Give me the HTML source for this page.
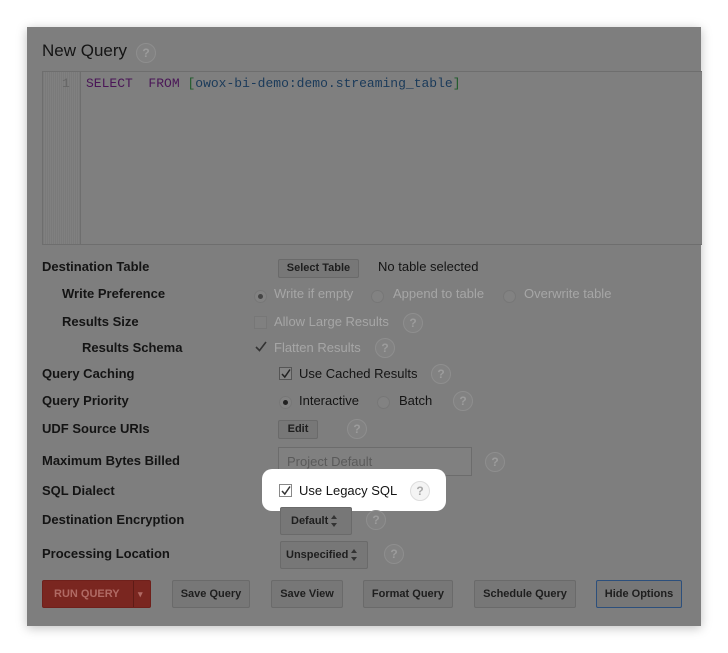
<!DOCTYPE html>
<html><head><meta charset="utf-8"><style>
*{box-sizing:border-box;margin:0;padding:0}
body{width:728px;height:653px;background:#fff;font-family:"Liberation Sans",sans-serif;position:relative;overflow:hidden}
.panel{position:absolute;left:27px;top:27px;width:674px;height:599px;background:#7e7e7e;box-shadow:0 2px 10px rgba(0,0,0,.25)}
.a{position:absolute;white-space:nowrap}
.lbl{font-weight:bold;font-size:13px;color:#141414}
.dis{font-size:13px;color:#a6a6a6}
.txt{font-size:13px;color:#141414}
.help{position:absolute;width:20px;height:20px;border-radius:50%;border:1px solid #8e8e8e;background:#828282;color:#9c9c9c;font-size:12px;font-weight:bold;text-align:center;line-height:18px}
.btn{position:absolute;background:#777;border:1px solid #6a6a6a;border-radius:2px;font-size:11px;font-weight:bold;color:#1e1e1e;text-align:center}
.cb{position:absolute;width:13px;height:13px;border:1px solid #555;background:#858585}
.cb svg{position:absolute;left:0;top:0}
.rd{position:absolute;width:13px;height:13px;border:1px solid #777;border-radius:50%;background:#828282}
.arr{display:inline-block;vertical-align:middle;width:7px;height:12px;position:relative;margin-left:3px}
.arr:before{content:"";position:absolute;left:0;top:0;border:3.5px solid transparent;border-bottom:4px solid #333;border-top:0}
.arr:after{content:"";position:absolute;left:0;bottom:0;border:3.5px solid transparent;border-top:4px solid #333;border-bottom:0}
</style></head><body>
<div class="panel"></div>
<div class="a" style="left:42px;top:41px;font-size:17px;color:#141414">New Query</div>
<div class="help" style="left:136px;top:43px">?</div>
<div class="a" style="left:42px;top:71px;width:660px;height:174px;border:1px solid #6e6e6e;border-right:none;background:#7f7f7f"></div>
<div class="a" style="left:43px;top:72px;width:38px;height:172px;background:repeating-linear-gradient(90deg,#7a7a7a 0 1px,#808080 1px 2px);border-right:1px solid #6e6e6e"></div>
<div class="a" style="left:62px;top:76px;font-family:'Liberation Mono',monospace;font-size:13px;color:#666">1</div>
<div class="a" style="left:86px;top:76px;font-family:'Liberation Mono',monospace;font-size:13px;color:#3a1a50"><span style="color:#4a1657">SELECT</span>&nbsp; <span style="color:#4a1657">FROM</span> <span style="color:#1e5a2a">[</span><span style="color:#1a3a5a">owox-bi-demo:demo.streaming_table</span><span style="color:#1e5a2a">]</span></div>

<div class="a lbl" style="left:42px;top:259px">Destination Table</div>
<div class="btn" style="left:278px;top:259px;width:81px;height:19px;line-height:17px">Select Table</div>
<div class="a txt" style="left:378px;top:259px">No table selected</div>

<div class="a lbl" style="left:62px;top:286px">Write Preference</div>
<div class="rd" style="left:254px;top:290px"><div style="width:5px;height:5px;background:#444;border-radius:50%;margin:3px"></div></div>
<div class="a dis" style="left:274px;top:286px">Write if empty</div>
<div class="rd" style="left:371px;top:290px"></div>
<div class="a dis" style="left:393px;top:286px">Append to table</div>
<div class="rd" style="left:503px;top:290px"></div>
<div class="a dis" style="left:524px;top:286px">Overwrite table</div>

<div class="a lbl" style="left:62px;top:314px">Results Size</div>
<div class="cb" style="left:254px;top:316px;border-color:#777;background:#808080"></div>
<div class="a dis" style="left:274px;top:314px">Allow Large Results</div>
<div class="help" style="left:403px;top:313px">?</div>

<div class="a lbl" style="left:82px;top:340px">Results Schema</div>
<svg class="a" style="left:254px;top:340px" width="14" height="13"><path d="M2 7 L5.5 10.5 L12 2" stroke="#333" stroke-width="1.6" fill="none"/></svg>
<div class="a dis" style="left:274px;top:340px">Flatten Results</div>
<div class="help" style="left:375px;top:338px">?</div>

<div class="a lbl" style="left:42px;top:366px">Query Caching</div>
<div class="cb" style="left:279px;top:367px"><svg width="12" height="12"><path d="M2 6 L4.8 9 L10 1.5" stroke="#222" stroke-width="1.5" fill="none"/></svg></div>
<div class="a txt" style="left:299px;top:366px">Use Cached Results</div>
<div class="help" style="left:431px;top:364px">?</div>

<div class="a lbl" style="left:42px;top:393px">Query Priority</div>
<div class="rd" style="left:279px;top:396px"><div style="width:5px;height:5px;background:#222;border-radius:50%;margin:3px"></div></div>
<div class="a txt" style="left:299px;top:393px">Interactive</div>
<div class="rd" style="left:377px;top:396px"></div>
<div class="a txt" style="left:399px;top:393px">Batch</div>
<div class="help" style="left:453px;top:391px">?</div>

<div class="a lbl" style="left:42px;top:421px">UDF Source URIs</div>
<div class="btn" style="left:278px;top:420px;width:40px;height:19px;line-height:17px">Edit</div>
<div class="help" style="left:347px;top:419px">?</div>

<div class="a lbl" style="left:42px;top:453px">Maximum Bytes Billed</div>
<div class="a" style="left:278px;top:447px;width:194px;height:29px;border:1px solid #6c6c6c;background:#808080;font-size:13px;color:#5a5a5a;padding:6px 8px">Project Default</div>
<div class="help" style="left:485px;top:452px">?</div>

<div class="a" style="left:262px;top:469px;width:184px;height:42px;background:#fff;border-radius:10px"></div>
<div class="a lbl" style="left:42px;top:483px">SQL Dialect</div>
<div class="a" style="left:279px;top:484px;width:13px;height:13px;border:1px solid #888;background:#fff"><svg width="12" height="12" style="position:absolute;left:0;top:0"><path d="M2 6 L4.8 9 L10 1.5" stroke="#333" stroke-width="1.5" fill="none"/></svg></div>
<div class="a txt" style="left:299px;top:483px">Use Legacy SQL</div>
<div class="help" style="left:410px;top:481px;background:#f4f4f4;border-color:#ddd;color:#aaa">?</div>

<div class="a lbl" style="left:42px;top:512px">Destination Encryption</div>
<div class="btn" style="left:280px;top:507px;width:72px;height:28px;line-height:26px;text-align:left;padding-left:10px">Default<span class="arr"></span></div>
<div class="help" style="left:366px;top:510px">?</div>

<div class="a lbl" style="left:42px;top:546px">Processing Location</div>
<div class="btn" style="left:280px;top:541px;width:88px;height:28px;line-height:26px;text-align:left;padding-left:5px">Unspecified<span class="arr"></span></div>
<div class="help" style="left:384px;top:544px">?</div>

<div class="btn" style="left:42px;top:580px;width:109px;height:28px;line-height:26px;background:#7a2620;border-color:#6f201b;color:#b06a64;text-align:left;padding-left:11px">RUN QUERY<span style="position:absolute;left:90px;top:0;height:26px;border-left:1px solid #5e1b16;padding-left:4px;font-size:9px">▾</span></div>
<div class="btn" style="left:172px;top:580px;width:78px;height:28px;line-height:26px">Save Query</div>
<div class="btn" style="left:271px;top:580px;width:72px;height:28px;line-height:26px">Save View</div>
<div class="btn" style="left:363px;top:580px;width:90px;height:28px;line-height:26px">Format Query</div>
<div class="btn" style="left:474px;top:580px;width:102px;height:28px;line-height:26px">Schedule Query</div>
<div class="btn" style="left:596px;top:580px;width:86px;height:28px;line-height:26px;border-color:#2c4f7c">Hide Options</div>
</body></html>
